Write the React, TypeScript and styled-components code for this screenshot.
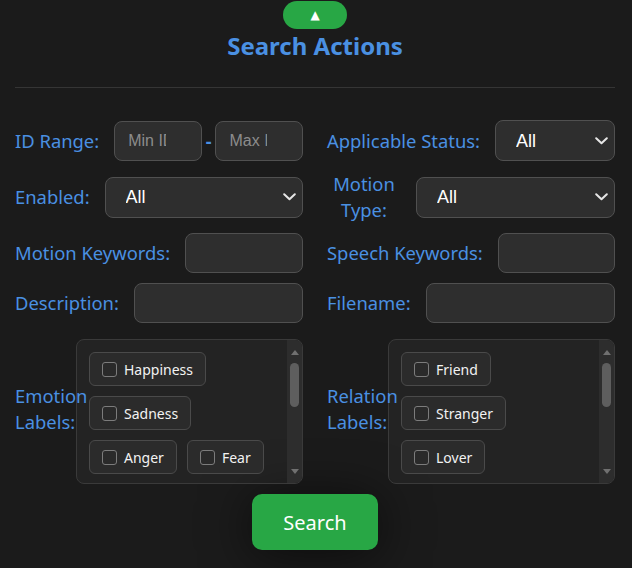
import React from "react";
import styled, { createGlobalStyle } from "styled-components";

const GlobalStyle = createGlobalStyle`
  html, body {
    margin: 0;
    background: #1b1b1b;
  }
  body {
    font-family: "Noto Sans", "Open Sans", sans-serif;
    color: #e8e8e8;
  }
  * {
    box-sizing: border-box;
  }
`;

const emotionLabels = [
  "Happiness",
  "Sadness",
  "Anger",
  "Fear",
  "Surprise",
  "Disgust",
  "Neutral",
  "Excitement",
  "Confusion",
  "Shyness",
  "Pride",
  "Anxiety",
];

const relationLabels = [
  "Friend",
  "Stranger",
  "Lover",
  "Acquaintance",
  "Family",
  "Colleague",
  "Enemy",
  "Teacher",
  "Student",
  "Rival",
];

const Chevron = () => (
  <svg width="13" height="8" viewBox="0 0 13 8" aria-hidden="true">
    <polyline
      points="1.2,1.2 6.5,6.3 11.8,1.2"
      fill="none"
      stroke="#e6e6e6"
      strokeWidth="2"
      strokeLinecap="round"
      strokeLinejoin="round"
    />
  </svg>
);

interface SelectProps {
  value?: string;
}

const Select: React.FC<SelectProps> = ({ value = "All" }) => (
  <SelectWrap>
    <NativeSelect defaultValue={value}>
      <option>All</option>
      <option>Yes</option>
      <option>No</option>
    </NativeSelect>
    <ArrowBox>
      <Chevron />
    </ArrowBox>
  </SelectWrap>
);

interface LabelBoxProps {
  title: string;
  items: string[];
}

const LabelBox: React.FC<LabelBoxProps> = ({ title, items }) => (
  <BoxField>
    <BoxLabel $wrap $width={46}>
      {title}
    </BoxLabel>
    <BoxFrame>
      <CheckList>
        {items.map((item) => (
          <Pill key={item}>
            <Check type="checkbox" />
            {item}
          </Pill>
        ))}
      </CheckList>
      <ScrollRail>
        <ArrowUp />
        <Thumb />
        <ArrowDown />
      </ScrollRail>
    </BoxFrame>
  </BoxField>
);

const App: React.FC = () => {
  return (
    <Page>
      <GlobalStyle />
      <Header>
        <ToggleButton aria-label="collapse">▲</ToggleButton>
        <Title>Search Actions</Title>
      </Header>

      <Fields>
        <Field>
          <Label>ID Range:</Label>
          <RangeGroup>
            <TextInput type="text" placeholder="Min ID" $clip />
            <Dash>-</Dash>
            <TextInput type="text" placeholder="Max ID" $clip />
          </RangeGroup>
        </Field>
        <Field>
          <Label>Applicable Status:</Label>
          <Select />
        </Field>

        <Field>
          <Label>Enabled:</Label>
          <Select />
        </Field>
        <Field>
          <Label $wrap $center $width={74}>
            Motion Type:
          </Label>
          <Select />
        </Field>

        <Field>
          <Label>Motion Keywords:</Label>
          <TextInput type="text" />
        </Field>
        <Field>
          <Label>Speech Keywords:</Label>
          <TextInput type="text" />
        </Field>

        <Field>
          <Label>Description:</Label>
          <TextInput type="text" />
        </Field>
        <Field>
          <Label>Filename:</Label>
          <TextInput type="text" />
        </Field>

        <LabelBox title="Emotion Labels:" items={emotionLabels} />
        <LabelBox title="Relation Labels:" items={relationLabels} />
      </Fields>

      <SearchButton>Search</SearchButton>
    </Page>
  );
};

const Page = styled.div`
  width: 632px;
  height: 568px;
  padding: 0 17px 0 15px;
  overflow: hidden;
`;

const Header = styled.div`
  display: flex;
  flex-direction: column;
  align-items: center;
  padding-top: 1px;
  padding-bottom: 25px;
  border-bottom: 1px solid #353535;
  margin-bottom: 32px;
`;

const ToggleButton = styled.button`
  width: 64px;
  height: 28px;
  border: none;
  border-radius: 14px;
  background: #28a745;
  color: #ffffff;
  font-family: "DejaVu Sans", sans-serif;
  font-size: 12px;
  line-height: 28px;
  padding: 0;
  cursor: pointer;
`;

const Title = styled.h2`
  margin: 0;
  color: #4a90e2;
  font-size: 24px;
  font-weight: 700;
  line-height: 33px;
`;

const Fields = styled.div`
  display: grid;
  grid-template-columns: 1fr 1fr;
  column-gap: 24px;
  row-gap: 10px;
`;

const Field = styled.div`
  display: flex;
  align-items: center;
  gap: 15px;
  min-width: 0;
`;

const BoxField = styled(Field)`
  margin-top: 6px;
`;

const Label = styled.label<{ $wrap?: boolean; $center?: boolean; $width?: number }>`
  position: relative;
  z-index: 1;
  flex: none;
  color: #4a90e2;
  font-size: 18.4px;
  line-height: 26px;
  white-space: ${(p) => (p.$wrap ? "normal" : "nowrap")};
  text-align: ${(p) => (p.$center ? "center" : "left")};
  width: ${(p) => (p.$width ? `${p.$width}px` : "auto")};
`;

const BoxLabel = styled(Label)`
  margin-bottom: 6px;
`;

const RangeGroup = styled.div`
  flex: 1;
  display: flex;
  align-items: center;
  gap: 4px;
  min-width: 0;
`;

const Dash = styled.span`
  color: #4a90e2;
  font-size: 18px;
  font-weight: 700;
`;

const TextInput = styled.input<{ $clip?: boolean }>`
  flex: 1;
  min-width: 0;
  height: 40px;
  padding: 0 ${(p) => (p.$clip ? "35px" : "13px")} 0 13px;
  background: #2e2e2e;
  border: 1px solid #505050;
  border-radius: 8px;
  color: #ffffff;
  font-family: "Liberation Sans", Arial, sans-serif;
  font-size: 16px;
  outline: none;

  &::placeholder {
    color: #8c8c8c;
  }
`;

const SelectWrap = styled.div`
  position: relative;
  flex: 1;
  min-width: 0;
`;

const NativeSelect = styled.select`
  width: 100%;
  height: 41px;
  padding: 0 30px 0 20px;
  appearance: none;
  background: #2e2e2e;
  border: 1px solid #505050;
  border-radius: 8px;
  color: #ffffff;
  font-family: "Liberation Sans", Arial, sans-serif;
  font-size: 18px;
  outline: none;
`;

const ArrowBox = styled.span`
  position: absolute;
  right: 7px;
  top: 50%;
  transform: translateY(-50%);
  display: flex;
  pointer-events: none;
`;

const BoxFrame = styled.div`
  position: relative;
  flex: 1;
  min-width: 0;
  height: 145px;
  background: rgba(255, 255, 255, 0.035);
  border: 1px solid #3a3a3a;
  border-radius: 8px;
  overflow: hidden;
`;

const CheckList = styled.div`
  height: 100%;
  overflow-y: scroll;
  scrollbar-width: none;
  display: flex;
  flex-wrap: wrap;
  align-content: flex-start;
  gap: 10px;
  padding: 12px 27px 12px 12px;

  &::-webkit-scrollbar {
    display: none;
  }
`;

const ScrollRail = styled.div`
  position: absolute;
  top: 0;
  right: 0;
  bottom: 0;
  width: 15px;
  display: flex;
  flex-direction: column;
  align-items: center;
  background: #2d2d2d;
`;

const ArrowUp = styled.span`
  margin-top: 10px;
  width: 0;
  height: 0;
  border-left: 4px solid transparent;
  border-right: 4px solid transparent;
  border-bottom: 5px solid #707070;
`;

const ArrowDown = styled.span`
  margin-top: auto;
  margin-bottom: 9px;
  width: 0;
  height: 0;
  border-left: 4px solid transparent;
  border-right: 4px solid transparent;
  border-top: 5px solid #707070;
`;

const Thumb = styled.span`
  margin-top: 8px;
  width: 9px;
  height: 44px;
  border-radius: 5px;
  background: #5e5e5e;
`;

const Pill = styled.label`
  display: inline-flex;
  align-items: center;
  gap: 7px;
  height: 34px;
  padding: 0 12px;
  background: #2b2b2b;
  border: 1px solid #4a4a4a;
  border-radius: 6px;
  color: #f2f2f2;
  font-size: 14px;
  white-space: nowrap;
`;

const Check = styled.input`
  appearance: none;
  width: 15px;
  height: 15px;
  margin: 0;
  background: #2a2a2a;
  border: 1.5px solid #7c7c7c;
  border-radius: 3px;
`;

const SearchButton = styled.button`
  display: block;
  width: 126px;
  height: 56px;
  margin: 10px auto 0;
  background: #28a745;
  border: none;
  border-radius: 10px;
  color: #ffffff;
  font-family: "Noto Sans", sans-serif;
  font-size: 20px;
  box-shadow: 0 4px 50px rgba(0, 0, 0, 0.6);
  cursor: pointer;
`;

export default App;
